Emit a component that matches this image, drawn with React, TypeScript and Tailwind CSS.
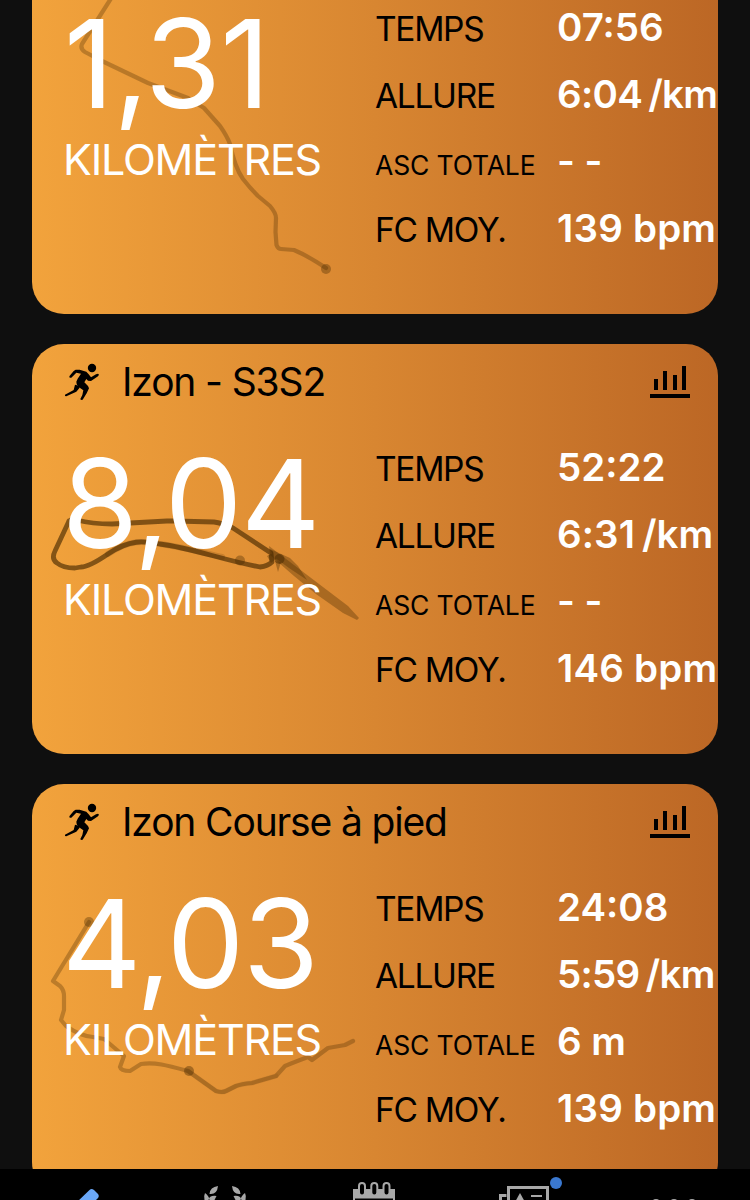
type Activity = {
  title: string;
  distance: string;
  time: string;
  pace: string;
  ascent: string;
  heartRate: string;
  route: 'first' | 'loop' | 'coast';
};

const activities: Activity[] = [
  { title: 'Izon Course à pied', distance: '1,31', time: '07:56', pace: '6:04 /km', ascent: '- -', heartRate: '139 bpm', route: 'first' },
  { title: 'Izon - S3S2', distance: '8,04', time: '52:22', pace: '6:31 /km', ascent: '- -', heartRate: '146 bpm', route: 'loop' },
  { title: 'Izon Course à pied', distance: '4,03', time: '24:08', pace: '5:59 /km', ascent: '6 m', heartRate: '139 bpm', route: 'coast' },
];

function RunnerIcon() {
  return (
    <svg className="-mt-1 h-[50px] w-[60px] shrink-0" viewBox="0 0 180 150" fill="#000">
      <circle cx="111" cy="39" r="12.5" />
      <path d="M74 44l20 6 7 8 7 9 15-9 6-2 3 3-3 5-21 14-9-1-5-5-6 10 11 11 3 7-7 15-12 19-5 1-2-3 6-12 3-14-14-10-6-8-1-8 4-9 10-15-14-3-15 15h-5l-1-4 13-16 6-4z" />
      <path d="M60 89l12 3 2 6-10 12-30 14-4-1v-4l26-14z" />
    </svg>
  );
}

function ChartIcon() {
  return (
    <svg className="h-8 w-10 shrink-0" viewBox="0 0 120 96" fill="#000">
      <path d="M12 39h12v33H12zM39 15h12v57H39zM69 27h12v45H69zM96 0h12v72H96zM0 84h120v12H0z" />
    </svg>
  );
}

// Faint GPS track, drawn behind the figures of the card
function Route({ kind }: { kind: Activity['route'] }) {
  return (
    <svg className="absolute inset-0 h-[410px] w-[686px]" viewBox="0 0 686 410" fill="none" stroke="#462800" strokeLinecap="round" strokeLinejoin="round">
      {kind === 'first' && (
        <>
          <path d="M82 90L78 96L50 140Q48 145 53 148L70 157L116 179L156 194L172 204L188 222Q195 232 198 240C202 260 206 268 211 275Q218 284 226 292L238 302Q244 309 244 314L243.500 328L244.500 341Q246 345 249 345L262 346Q276 352 294 364" strokeWidth="4.2" strokeOpacity="0.3" />
          <circle cx="294" cy="365" r="5" fill="#462800" fillOpacity="0.35" stroke="none" />
        </>
      )}
      {kind === 'loop' && (
        <>
          <path d="M37 177L23 207Q19 215 25 219Q31 224 43 224L49 223Q57 223 76 210C98 195 112 197 128 200C160 204 190 216 228 223Q236 222 240 218L239 209L201 184Q190 179 182 178L143 177L135 177L80 180Q60 180 45 176Q39 175 37 177" strokeWidth="4.8" strokeOpacity="0.64" />
          <path d="M76 210C98 195 112 197 128 200C145 202 165 207 190 213" strokeWidth="6" strokeOpacity="0.18" />
          <path d="M237 202L287 240L316 262L327 274L325 276L311 269L284 250L262 232L238 211z" fill="#462800" fillOpacity="0.34" stroke="none" />
          <path d="M238 205l20 9 8 8 9 14-18-12-15-11zM243 217l6 1-3 10zM235 212l8-4 2 6-6 5z" fill="#462800" fillOpacity="0.35" stroke="none" />
          <circle cx="247.500" cy="215" r="5" fill="#462800" fillOpacity="0.5" stroke="none" />
          <circle cx="208" cy="216.500" r="5" fill="#462800" fillOpacity="0.35" stroke="none" />
        </>
      )}
      {kind === 'coast' && (
        <>
          <path d="M57 138L21 197L28 202Q32 206 32 212V226L29 236L34 242Q48 252 61 253L72 255L92 272L88 283Q89 287 98 287L109 280C123 278 134 281 156 287L184 307Q190 309 194 307L204 302Q209 300 220 299L244 292L253 282Q260 279 276 273L280 276L296 264L313 261L321 257" strokeWidth="4.2" strokeOpacity="0.3" />
          <path d="M156 287L184 307Q190 309 194 307L204 302Q209 300 220 299L244 292" strokeWidth="5" strokeOpacity="0.08" />
          <circle cx="57" cy="138" r="5" fill="#462800" fillOpacity="0.35" stroke="none" />
          <circle cx="157" cy="287" r="5" fill="#462800" fillOpacity="0.4" stroke="none" />
        </>
      )}
    </svg>
  );
}

// The digit 1 is narrow, so values that hold one are spaced wider
function valueSpacing(value: string) {
  if (value.includes('/')) {
    return value.includes('1') ? 'tracking-[0.1px] [word-spacing:-3px]' : 'tracking-[-0.7px] [word-spacing:-3px]';
  }
  return value.includes('1') ? 'tracking-[0.2px]' : 'tracking-normal';
}

function Stat({ label, value, small }: { label: string; value: string; small?: boolean }) {
  return (
    <div className="flex h-[67px] items-baseline whitespace-nowrap leading-[67px]">
      <dt className={small ? 'w-[182px] shrink-0 text-[26.5px] tracking-[-0.15px] text-black' : 'w-[182px] shrink-0 text-[33.5px] tracking-[-1.3px] text-black'}>
        {label}
      </dt>
      <dd className={`text-[38.5px] font-semibold text-white ${valueSpacing(value)}`}>{value}</dd>
    </div>
  );
}

function ActivityCard({ activity }: { activity: Activity }) {
  const startsWithOne = activity.distance.startsWith('1');

  return (
    <article className="relative h-[410px] shrink-0 overflow-hidden rounded-[32px] bg-linear-to-r from-[#f2a33c] via-[#d88631] to-[#bc6725]">
      <Route kind={activity.route} />
      <div className="relative">
        <header className="flex h-[76px] items-center pl-[23px] pr-7">
          <RunnerIcon />
          <h2 className="-mt-0.5 ml-[7px] flex-1 text-[39px] leading-none tracking-[-1.15px] text-black">{activity.title}</h2>
          <ChartIcon />
        </header>
        <div className="flex pt-3.5">
          <div className="w-[343px] shrink-0 pl-8 text-white">
            <p className={startsWithOne ? 'text-[123px] leading-[139px] tracking-[-0.6px]' : '-ml-0.5 text-[123px] leading-[139px] tracking-[-1.4px]'}>
              {activity.distance}
            </p>
            <p className="-ml-px text-[43px] leading-[52px] tracking-[-1.2px]">KILOMÈTRES</p>
          </div>
          <dl>
            <Stat label="TEMPS" value={activity.time} />
            <Stat label="ALLURE" value={activity.pace} />
            <Stat label="ASC TOTALE" value={activity.ascent} small />
            <Stat label="FC MOY." value={activity.heartRate} />
          </dl>
        </div>
      </div>
    </article>
  );
}

function TabBar() {
  return (
    <nav className="flex h-[31px] shrink-0 overflow-hidden bg-black">
      {/* Edit */}
      <svg className="h-[31px] w-[150px]" viewBox="0 0 150 31">
        <path d="M89.500 21q2-2 4.500 0l4 4q1.500 2 0 4l-5 5H76z" fill="#6aa8f8" />
      </svg>
      {/* Challenges */}
      <svg className="h-[31px] w-[150px]" viewBox="0 0 150 31" fill="#a8a8a8">
        <path d="M68 17q-8 1-8.500 8 7.500 1 8.500-8zM55 24q4 3 4.500 7h-5q-1-4 .5-7zM66.500 27q-7-1-8 4h6z" />
        <path d="M82 17q8 1 8.500 8-7.500 1-8.500-8zM95 24q-4 3-4.500 7h5q1-4-.5-7zM83.500 27q7-1 8 4h-6z" />
      </svg>
      {/* Calendar */}
      <svg className="h-[31px] w-[150px]" viewBox="0 0 150 31" fill="none">
        <path d="M53 20h42v11H53z" fill="#a8a8a8" />
        <path d="M55 29.500h38V31H55z" fill="#000" />
        <rect x="59" y="14" width="6" height="12.500" rx="3" fill="#000" stroke="#a8a8a8" strokeWidth="2" />
        <rect x="71.300" y="14" width="6" height="12.500" rx="3" fill="#000" stroke="#a8a8a8" strokeWidth="2" />
        <rect x="83.500" y="14" width="6" height="12.500" rx="3" fill="#000" stroke="#a8a8a8" strokeWidth="2" />
      </svg>
      {/* News */}
      <svg className="h-[31px] w-[150px]" viewBox="0 0 150 31" fill="none" stroke="#a8a8a8" strokeWidth="3">
        <path d="M58.500 33V18.500h39V33M50.500 33v-6.500h6" />
        <path d="M70 24l5 9H65z" fill="#a8a8a8" stroke="none" />
        <path d="M81 27h11" strokeWidth="2" />
        <circle cx="106" cy="14" r="6" fill="#3a78d0" stroke="none" />
      </svg>
      {/* More */}
      <svg className="h-[31px] w-[150px]" viewBox="0 0 150 31" fill="#a8a8a8">
        <circle cx="56" cy="34" r="4" />
        <circle cx="74" cy="34" r="4" />
        <circle cx="92" cy="34" r="4" />
      </svg>
    </nav>
  );
}

export default function App() {
  return (
    <div className="flex h-[1200px] w-[750px] flex-col overflow-hidden bg-[#0f0f0f] font-['Inter',sans-serif]">
      <main className="min-h-0 flex-1 overflow-hidden">
        <div className="-mt-24 flex flex-col gap-[30px] px-8">
          {activities.map((activity) => (
            <ActivityCard key={activity.distance} activity={activity} />
          ))}
        </div>
      </main>
      <TabBar />
    </div>
  );
}
